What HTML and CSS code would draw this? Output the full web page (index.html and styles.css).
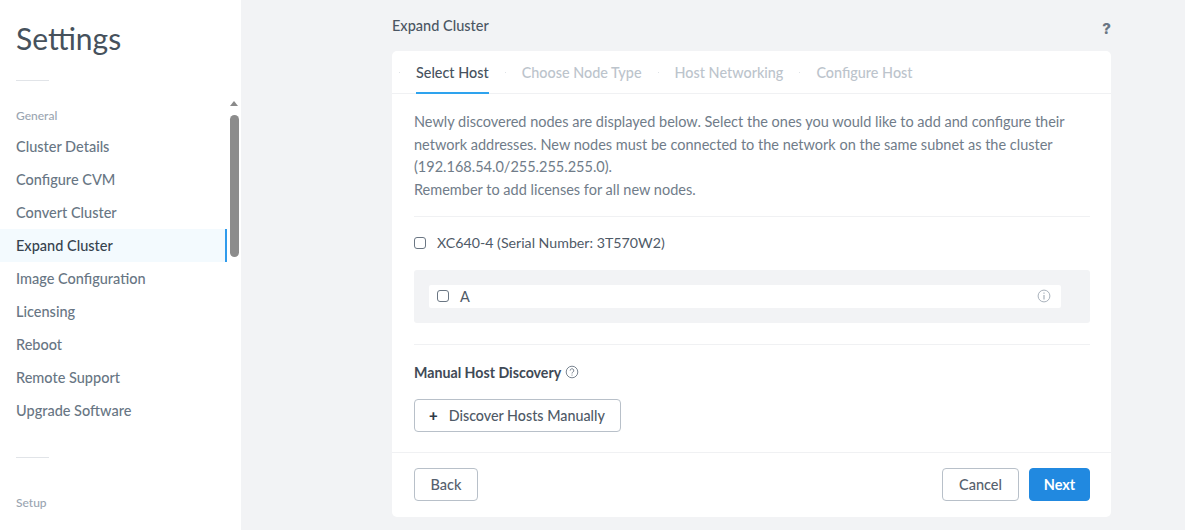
FILE: index.html
```html
<!DOCTYPE html>
<html lang="en">
<head>
<meta charset="utf-8">
<title>Expand Cluster</title>
<link rel="stylesheet" href="styles.css">
</head>
<body>
<div class="app">
  <aside class="sidebar">
    <h1 class="title">Settings</h1>
    <div class="rule"></div>
    <nav class="nav">
      <div class="group">General</div>
      <a class="item">Cluster Details</a>
      <a class="item">Configure CVM</a>
      <a class="item">Convert Cluster</a>
      <a class="item active">Expand Cluster</a>
      <a class="item">Image Configuration</a>
      <a class="item">Licensing</a>
      <a class="item">Reboot</a>
      <a class="item">Remote Support</a>
      <a class="item">Upgrade Software</a>
      <div class="rule rule-nav"></div>
      <div class="group group-setup">Setup</div>
      <a class="item">Generate State Check</a>
    </nav>
    <div class="scroll-arrow"></div>
    <div class="scroll-thumb"></div>
  </aside>
  <main class="main">
    <div class="column">
      <header class="head">
        <span class="head-title">Expand Cluster</span>
        <span class="help">?</span>
      </header>
      <section class="card">
        <div class="tabs">
          <span class="dot"></span><span class="tab current">Select Host</span>
          <span class="dot"></span><span class="tab">Choose Node Type</span>
          <span class="dot"></span><span class="tab">Host Networking</span>
          <span class="dot"></span><span class="tab">Configure Host</span>
        </div>
        <div class="body">
          <p class="intro">Newly discovered nodes are displayed below. Select the ones you would like to add and configure their<br>network addresses. New nodes must be connected to the network on the same subnet as the cluster<br>(192.168.54.0/255.255.255.0).<br>Remember to add licenses for all new nodes.</p>
          <hr class="sep">
          <label class="node"><input type="checkbox" class="check"><span>XC640-4 (Serial Number: 3T570W2)</span></label>
          <div class="panel">
            <div class="panel-row">
              <label class="block"><input type="checkbox" class="check"><span>A</span></label>
              <svg class="info" viewBox="0 0 14 14" width="14" height="14" aria-hidden="true"><circle cx="7" cy="7" r="5.9" fill="none" stroke="#a9b2bc" stroke-width="1"/><path d="M7 6v4.4M7 3.6v1.2" stroke="#a9b2bc" stroke-width="1.2" fill="none"/></svg>
            </div>
          </div>
          <hr class="sep sep-second">
          <div class="manual"><span>Manual Host Discovery</span>
            <svg class="qmark" viewBox="0 0 14 14" width="14" height="14" aria-hidden="true"><circle cx="7" cy="7" r="5.8" fill="none" stroke="#6b7785" stroke-width="0.9"/><path d="M5.2 5.6a1.8 1.8 0 1 1 2.7 1.5c-.6.4-.9.7-.9 1.4M7 9.6v1" stroke="#6b7785" stroke-width="0.9" fill="none"/></svg>
          </div>
          <button class="btn btn-discover"><span class="plus">+</span>Discover Hosts Manually</button>
        </div>
        <footer class="foot">
          <button class="btn btn-back">Back</button>
          <div class="foot-right">
            <button class="btn btn-cancel">Cancel</button>
            <button class="btn btn-next">Next</button>
          </div>
        </footer>
      </section>
    </div>
  </main>
</div>
</body>
</html>
```
FILE: styles.css
```css
* { box-sizing: border-box; }
html, body { margin: 0; height: 100%; overflow: hidden; }
body { font-family: "Lato", "Liberation Sans", sans-serif; font-size: 14.5px; color: #56616e; background: #f2f3f5; }
.app { display: flex; height: 530px; overflow: hidden; }
.sidebar { position: relative; width: 241px; flex: none; background: #fff; height: 530px; overflow: hidden; }
.title { margin: 0; padding: 20px 0 0 16px; font-size: 30px; line-height: 37px; font-weight: 400; color: #46515c; }
.rule { width: 33px; height: 1px; background: #e1e4e8; margin: 23px 0 0 16px; }
.nav { display: flex; flex-direction: column; margin-top: 27px; width: 227px; }
.group { font-size: 12px; line-height: 16px; color: #9aa5b1; padding-left: 16px; margin-bottom: 6px; font-weight: 500; }
.group-setup { margin: 0 0 9px; }
.item { display: block; height: 33px; line-height: 33px; padding-left: 16px; color: #687684; font-size: 14.5px; font-weight: 500; white-space: nowrap; }
.item.active { background: #f3fafe; color: #36424e; border-right: 2px solid #2f9bec; }
.rule-nav { margin: 30px 0 37px 16px; }
.scroll-arrow { position: absolute; left: 230px; top: 101px; width: 0; height: 0; border-left: 4.5px solid transparent; border-right: 4.5px solid transparent; border-bottom: 5px solid #8a8a8a; }
.scroll-thumb { position: absolute; left: 230px; top: 115px; width: 9px; height: 142px; border-radius: 5px; background: #8c8c8c; }
.main { flex: 1; display: flex; padding-left: 151px; }
.column { width: 719px; }
.head { display: flex; justify-content: space-between; height: 51px; padding-top: 17px; line-height: 18px; }
.head-title { font-size: 14.5px; color: #4b5663; font-weight: 500; }
.help { font-family: "Inter", "Liberation Sans", sans-serif; font-size: 15px; font-weight: 800; color: #6a7683; margin: 3px 0 0; }
.card { background: #fff; border-radius: 5px; height: 466px; display: flex; flex-direction: column; }
.tabs { display: flex; align-items: center; height: 43px; border-bottom: 1px solid #f0f1f3; padding-left: 7px; }
.dot { width: 1px; height: 1px; background: #dfe3e7; margin-right: 16px; }
.tab { height: 43px; line-height: 44px; margin-right: 16px; color: #bcc4cc; font-size: 14.4px; font-weight: 500; }
.tab.current { color: #47525e; border-bottom: 2px solid #2ea3ee; }
.body { flex: 1; padding: 0 21px 0 22px; }
.intro { margin: 17px 0 0; font-size: 14.5px; line-height: 22.5px; color: #707c89; }
.sep { border: 0; height: 1px; background: #f0f1f3; margin: 14.8px 0 0; }
.node { display: flex; align-items: center; height: 52px; color: #4f5a67; font-size: 14.2px; }
.check { appearance: none; margin: 0; width: 12px; height: 12px; border: 1px solid #6a7683; border-radius: 3px; background: #fff; flex: none; }
.node .check { margin-right: 11px; }
.panel { background: #f2f3f5; border-radius: 3px; padding: 15px 29px 15px 15px; height: 53px; margin-top: 1px; }
.panel-row { display: flex; align-items: center; justify-content: space-between; height: 23px; background: #fff; border-radius: 2px; padding: 0 10px 0 8px; }
.block { display: flex; align-items: center; color: #4f5a67; }
.block .check { margin-right: 11px; }
.info { display: block; }
.sep-second { margin-top: 21px; }
.manual { display: flex; align-items: center; gap: 4px; margin-top: 19px; height: 18px; font-weight: 700; font-size: 14.2px; color: #3f4a56; }
.qmark { margin-top: -2px; }
.btn { font-family: inherit; font-size: 14.5px; font-weight: 500; border-radius: 4px; height: 33px; border: 1px solid #b8c0c9; background: #fff; color: #56616e; padding: 0; }
.btn-discover { display: flex; align-items: center; width: 207px; margin-top: 17px; padding-left: 14px; color: #4f5a67; font-size: 14.3px; }
.plus { font-weight: 900; color: #2f3b47; font-size: 15px; margin-right: 11px; }
.foot { display: flex; justify-content: space-between; align-items: center; height: 65px; padding: 0 21px 2px 22px; border-top: 1px solid #f0f1f3; }
.foot-right { display: flex; gap: 10px; }
.btn-back { width: 64px; }
.btn-cancel { width: 77px; }
.btn-next { width: 61px; background: #2189e0; border-color: #2189e0; color: #fff; font-weight: 700; }
```
